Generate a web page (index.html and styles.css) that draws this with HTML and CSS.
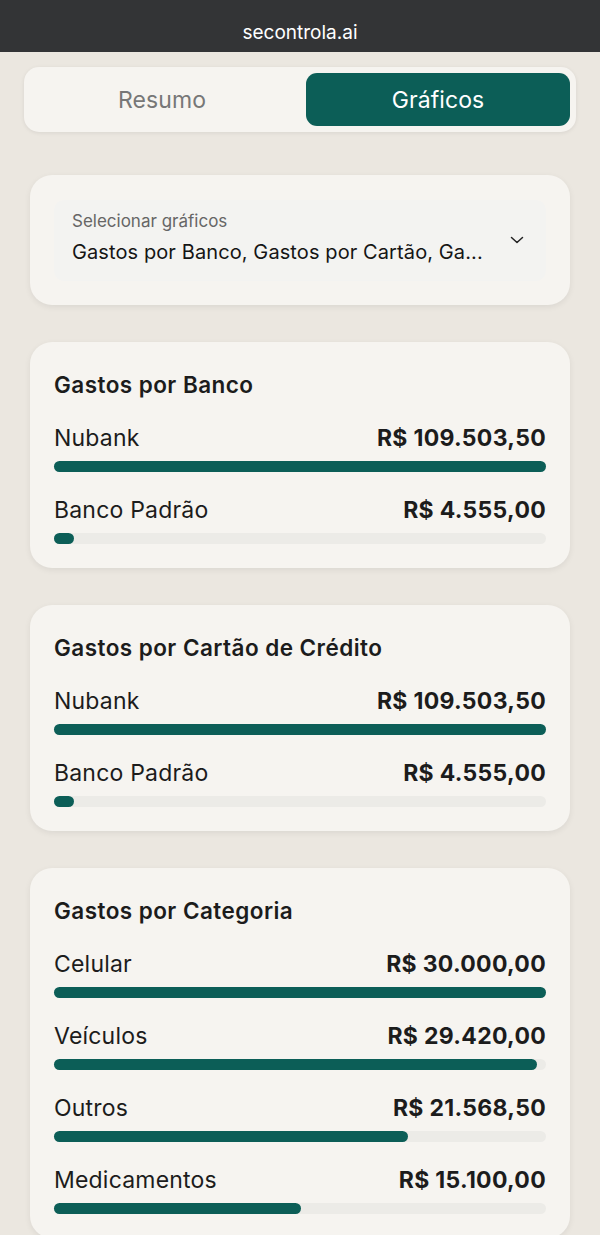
FILE: index.html
```html
<!DOCTYPE html>
<html lang="pt-BR">

<head>
    <meta charset="UTF-8">
    <meta name="viewport" content="width=device-width, initial-scale=1.0">
    <title>secontrola.ai - Gráficos</title>
    <link rel="stylesheet" href="styles.css">
</head>

<body>

    <header class="topbar">
        <span>secontrola.ai</span>
    </header>

    <main class="page">
        <nav class="tabs">
            <button class="tab">Resumo</button>
            <button class="tab active">Gráficos</button>
        </nav>

        <section class="card picker-card">
            <div class="picker">
                <div class="picker-text">
                    <span class="picker-label">Selecionar gráficos</span>
                    <span class="picker-value">Gastos por Banco, Gastos por Cartão, Ga...</span>
                </div>
                <svg class="chevron" width="14" height="14" viewBox="0 0 14 14" fill="none">
                    <path d="M1.5 4.5 L7 9.5 L12.5 4.5" stroke="#222" stroke-width="1.5" stroke-linecap="round" stroke-linejoin="round"/>
                </svg>
            </div>
        </section>

        <section class="card">
            <h2>Gastos por Banco</h2>
            <div class="row">
                <div class="row-head"><span>Nubank</span><strong>R$ 109.503,50</strong></div>
                <div class="track"><div class="fill" style="width: 100%"></div></div>
            </div>
            <div class="row">
                <div class="row-head"><span>Banco Padrão</span><strong>R$ 4.555,00</strong></div>
                <div class="track"><div class="fill" style="width: 4.16%"></div></div>
            </div>
        </section>

        <section class="card">
            <h2>Gastos por Cartão de Crédito</h2>
            <div class="row">
                <div class="row-head"><span>Nubank</span><strong>R$ 109.503,50</strong></div>
                <div class="track"><div class="fill" style="width: 100%"></div></div>
            </div>
            <div class="row">
                <div class="row-head"><span>Banco Padrão</span><strong>R$ 4.555,00</strong></div>
                <div class="track"><div class="fill" style="width: 4.16%"></div></div>
            </div>
        </section>

        <section class="card">
            <h2>Gastos por Categoria</h2>
            <div class="row">
                <div class="row-head"><span>Celular</span><strong>R$ 30.000,00</strong></div>
                <div class="track"><div class="fill" style="width: 100%"></div></div>
            </div>
            <div class="row">
                <div class="row-head"><span>Veículos</span><strong>R$ 29.420,00</strong></div>
                <div class="track"><div class="fill" style="width: 98.07%"></div></div>
            </div>
            <div class="row">
                <div class="row-head"><span>Outros</span><strong>R$ 21.568,50</strong></div>
                <div class="track"><div class="fill" style="width: 71.9%"></div></div>
            </div>
            <div class="row">
                <div class="row-head"><span>Medicamentos</span><strong>R$ 15.100,00</strong></div>
                <div class="track"><div class="fill" style="width: 50.3%"></div></div>
            </div>
        </section>
    </main>

</body>

</html>
```

FILE: styles.css
```css
* {
    margin: 0;
    padding: 0;
    box-sizing: border-box;
}

body {
    font-family: 'Inter', 'Roboto', sans-serif;
    background-color: #ebe7e0;
    color: #1c1c1c;
    height: 1235px;
    overflow: hidden;
}

.topbar {
    height: 52px;
    background-color: #333436;
    color: #fff;
    display: flex;
    align-items: center;
    justify-content: center;
    padding-top: 12px;
    font-size: 19px;
}

.page {
    display: flex;
    flex-direction: column;
    padding: 15px 30px 0;
}

.tabs {
    display: flex;
    gap: 12px;
    margin: 0 -6px 43px;
    padding: 6px;
    background-color: #f6f4f0;
    border-radius: 15px;
    box-shadow: 0 1px 4px rgba(0, 0, 0, 0.08);
}

.tab {
    flex: 1;
    height: 53px;
    border: none;
    background: none;
    border-radius: 11px;
    font-family: inherit;
    font-size: 23px;
    letter-spacing: 0.1px;
    color: #777;
}

.tab.active {
    background-color: #0c5e57;
    color: #fff;
}

.card {
    background-color: #f6f4f0;
    border-radius: 22px;
    padding: 29px 24px 24px;
    margin-bottom: 37px;
    box-shadow: 0 2px 6px rgba(0, 0, 0, 0.07);
}

.picker-card {
    padding: 25px 24px 24px;
}

.picker {
    display: flex;
    align-items: center;
    justify-content: space-between;
    background-color: #f3f3f1;
    border-radius: 10px;
    padding: 11px 22px 16px 18px;
}

.picker-text {
    display: flex;
    flex-direction: column;
    gap: 8px;
}

.picker-label {
    font-size: 17px;
    line-height: 20px;
    color: #666;
}

.picker-value {
    font-size: 20px;
    line-height: 26px;
    letter-spacing: 0.1px;
    color: #151515;
}

.chevron {
    margin-top: 4px;
}

.card h2 {
    font-size: 22.5px;
    font-weight: 600;
    line-height: 28px;
    letter-spacing: 0.45px;
    margin-bottom: 25px;
}

.row {
    display: flex;
    flex-direction: column;
    gap: 9px;
}

.row + .row {
    margin-top: 24px;
}

.row-head {
    display: flex;
    justify-content: space-between;
    font-size: 23px;
    line-height: 28px;
    letter-spacing: 0.2px;
}

.row-head strong {
    font-weight: 700;
    letter-spacing: 0.3px;
}

.track {
    height: 11px;
    background-color: #ecebe7;
    border-radius: 6px;
}

.fill {
    height: 100%;
    background-color: #0c5e57;
    border-radius: 6px;
    min-width: 20px;
}
```
